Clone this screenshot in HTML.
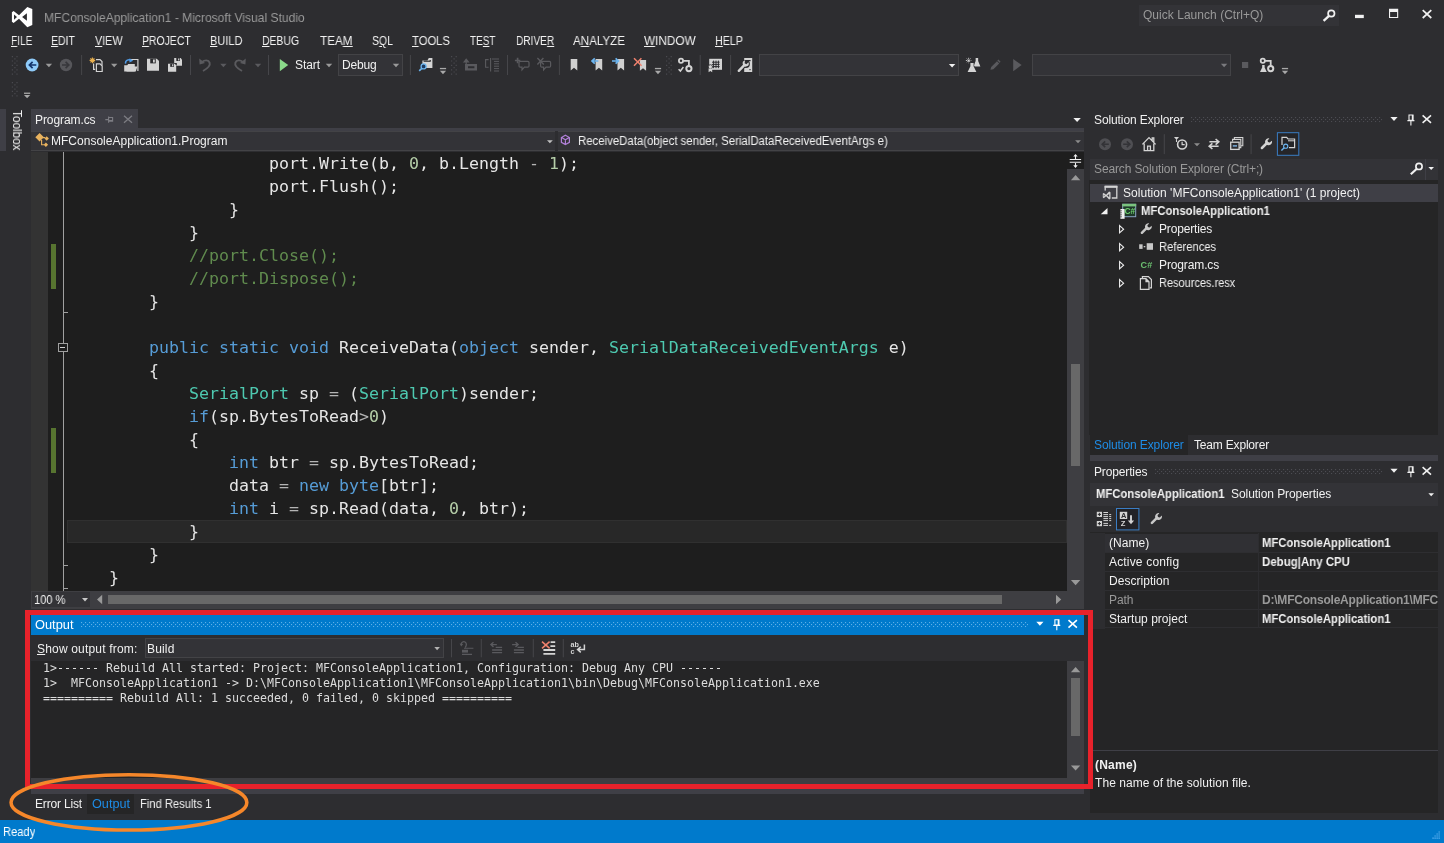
<!DOCTYPE html>
<html lang="en"><head><meta charset="utf-8"><title>MFConsoleApplication1 - Microsoft Visual Studio</title>
<style>
html,body{margin:0;padding:0;}
body{width:1444px;height:843px;overflow:hidden;background:#2D2D30;position:relative;font-family:'Liberation Sans',sans-serif;font-size:12px;color:#F1F1F1;}
.r{position:absolute;}
.t{position:absolute;white-space:pre;transform-origin:0 50%;will-change:transform;}
.t u{text-decoration:underline;text-underline-offset:1px;}
svg{position:absolute;overflow:visible;}
.c{position:absolute;white-space:pre;font-family:'DejaVu Sans Mono','Liberation Mono',monospace;font-size:16.6px;letter-spacing:0.007px;line-height:23px;color:#E6E6E6;left:69px;will-change:transform;}
.k{color:#569CD6} .y{color:#4EC9B0} .m{color:#608B4E} .n{color:#B5CEA8} .g{color:#B4B4B4}
.o{position:absolute;white-space:pre;font-family:'DejaVu Sans Mono','Liberation Mono',monospace;font-size:11.63px;line-height:15px;color:#DCDCDC;left:43px;will-change:transform;}
</style></head>
<body>
<span class="t" style="left:43.50px;top:9.90px;font-size:13px;line-height:16px;color:#999999;transform:scaleX(0.9283);">MFConsoleApplication1 - Microsoft Visual Studio</span>
<div class="r" style="left:1138.5px;top:4.5px;width:200px;height:21.5px;background:#333337;"></div>
<span class="t" style="left:1143.00px;top:6.84px;font-size:12px;line-height:16px;color:#999999;letter-spacing:0.032px;">Quick Launch (Ctrl+Q)</span>
<span class="t" style="left:10.65px;top:32.87px;font-size:12.5px;line-height:16px;color:#F1F1F1;transform:scaleX(0.8142);"><u>F</u>ILE</span>
<span class="t" style="left:51.40px;top:32.87px;font-size:12.5px;line-height:16px;color:#F1F1F1;transform:scaleX(0.8426);"><u>E</u>DIT</span>
<span class="t" style="left:95.40px;top:32.87px;font-size:12.5px;line-height:16px;color:#F1F1F1;transform:scaleX(0.8606);"><u>V</u>IEW</span>
<span class="t" style="left:142.40px;top:32.87px;font-size:12.5px;line-height:16px;color:#F1F1F1;transform:scaleX(0.8356);"><u>P</u>ROJECT</span>
<span class="t" style="left:210.40px;top:32.87px;font-size:12.5px;line-height:16px;color:#F1F1F1;transform:scaleX(0.8825);"><u>B</u>UILD</span>
<span class="t" style="left:262.40px;top:32.87px;font-size:12.5px;line-height:16px;color:#F1F1F1;transform:scaleX(0.8323);"><u>D</u>EBUG</span>
<span class="t" style="left:319.90px;top:32.87px;font-size:12.5px;line-height:16px;color:#F1F1F1;transform:scaleX(0.9357);">TEA<u>M</u></span>
<span class="t" style="left:371.90px;top:32.87px;font-size:12.5px;line-height:16px;color:#F1F1F1;transform:scaleX(0.8395);">S<u>Q</u>L</span>
<span class="t" style="left:412.40px;top:32.87px;font-size:12.5px;line-height:16px;color:#F1F1F1;transform:scaleX(0.9014);"><u>T</u>OOLS</span>
<span class="t" style="left:469.90px;top:32.87px;font-size:12.5px;line-height:16px;color:#F1F1F1;transform:scaleX(0.7980);">TE<u>S</u>T</span>
<span class="t" style="left:515.90px;top:32.87px;font-size:12.5px;line-height:16px;color:#F1F1F1;transform:scaleX(0.8098);">DRIVE<u>R</u></span>
<span class="t" style="left:573.40px;top:32.87px;font-size:12.5px;line-height:16px;color:#F1F1F1;transform:scaleX(0.9278);">A<u>N</u>ALYZE</span>
<span class="t" style="left:644.40px;top:32.87px;font-size:12.5px;line-height:16px;color:#F1F1F1;transform:scaleX(0.9433);"><u>W</u>INDOW</span>
<span class="t" style="left:715.40px;top:32.87px;font-size:12.5px;line-height:16px;color:#F1F1F1;transform:scaleX(0.8574);"><u>H</u>ELP</span>
<div class="r" style="left:338px;top:54px;width:65px;height:21.5px;background:#333337;box-sizing:border-box;border:1px solid #434346;"></div>
<div class="r" style="left:759px;top:54px;width:200px;height:21.5px;background:#333337;box-sizing:border-box;border:1px solid #434346;"></div>
<div class="r" style="left:1031.5px;top:54px;width:199px;height:21.5px;background:#333337;box-sizing:border-box;border:1px solid #434346;"></div>
<span class="t" style="left:295.40px;top:57.09px;font-size:12px;line-height:16px;color:#F1F1F1;letter-spacing:-0.069px;">Start</span>
<span class="t" style="left:341.90px;top:57.09px;font-size:12px;line-height:16px;color:#F1F1F1;letter-spacing:-0.175px;">Debug</span>
<div class="r" style="left:0px;top:109px;width:5.5px;height:42px;background:#3F3F46;"></div>
<span class="t" style="left:24px;top:109.5px;font-size:12px;line-height:14px;transform-origin:0 0;transform:rotate(90deg) scaleX(0.98);">Toolbox</span>
<div class="r" style="left:31px;top:109px;width:106.5px;height:19.5px;background:#3F3F46;"></div>
<div class="r" style="left:31px;top:128px;width:1053px;height:3.2px;background:#3F3F46;"></div>
<span class="t" style="left:34.90px;top:112.04px;font-size:12px;line-height:16px;color:#F1F1F1;letter-spacing:-0.086px;">Program.cs</span>
<div class="r" style="left:31px;top:131.2px;width:1053px;height:20.3px;background:#333337;box-sizing:border-box;border-top:1px solid #434346;border-bottom:1px solid #434346;"></div>
<div class="r" style="left:555px;top:131.2px;width:2.5px;height:20.3px;background:#2D2D30;"></div>
<span class="t" style="left:51.40px;top:132.84px;font-size:12px;line-height:16px;color:#F1F1F1;letter-spacing:0.014px;">MFConsoleApplication1.Program</span>
<span class="t" style="left:577.65px;top:132.84px;font-size:12px;line-height:16px;color:#F1F1F1;transform:scaleX(0.9497);">ReceiveData(object sender, SerialDataReceivedEventArgs e)</span>
<div class="r" style="left:31px;top:151.5px;width:1036px;height:439.5px;background:#1E1E1E;"></div>
<div class="r" style="left:31px;top:151.5px;width:16.5px;height:439.5px;background:#333333;"></div>
<div class="r" style="left:67px;top:520px;width:999.5px;height:22.5px;background:#282828;box-sizing:border-box;border:1px solid #303030;"></div>
<div class="r" style="left:50.5px;top:243.7px;width:5.7px;height:45.8px;background:#577430;"></div>
<div class="r" style="left:50.5px;top:427.7px;width:5.7px;height:45.8px;background:#577430;"></div>
<div class="r" style="left:63px;top:151.5px;width:1px;height:439.5px;background:#A0A0A0;"></div>
<div class="r" style="left:63px;top:312px;width:4.5px;height:1px;background:#A0A0A0;"></div>
<div class="r" style="left:63px;top:565px;width:4.5px;height:1px;background:#A0A0A0;"></div>
<div class="r" style="left:63px;top:588px;width:4.5px;height:1px;background:#A0A0A0;"></div>
<div class="r" style="left:58px;top:342.5px;width:9.5px;height:9.5px;background:#1E1E1E;box-sizing:border-box;border:1px solid #A0A0A0;"></div>
<div class="r" style="left:60.3px;top:346.8px;width:5px;height:1px;background:#D0D0D0;"></div>
<div class="c" style="top:151.8px">                    port.Write(b, <span class="n">0</span>, b.Length <span class="g">-</span> <span class="n">1</span>);</div>
<div class="c" style="top:174.8px">                    port.Flush();</div>
<div class="c" style="top:197.8px">                }</div>
<div class="c" style="top:220.8px">            }</div>
<div class="c" style="top:243.8px">            <span class="m">//port.Close();</span></div>
<div class="c" style="top:266.8px">            <span class="m">//port.Dispose();</span></div>
<div class="c" style="top:289.8px">        }</div>
<div class="c" style="top:335.8px">        <span class="k">public</span> <span class="k">static</span> <span class="k">void</span> ReceiveData(<span class="k">object</span> sender, <span class="y">SerialDataReceivedEventArgs</span> e)</div>
<div class="c" style="top:358.8px">        {</div>
<div class="c" style="top:381.8px">            <span class="y">SerialPort</span> sp <span class="g">=</span> (<span class="y">SerialPort</span>)sender;</div>
<div class="c" style="top:404.8px">            <span class="k">if</span>(sp.BytesToRead<span class="g">&gt;</span><span class="n">0</span>)</div>
<div class="c" style="top:427.8px">            {</div>
<div class="c" style="top:450.8px">                <span class="k">int</span> btr <span class="g">=</span> sp.BytesToRead;</div>
<div class="c" style="top:473.8px">                data <span class="g">=</span> <span class="k">new</span> <span class="k">byte</span>[btr];</div>
<div class="c" style="top:496.8px">                <span class="k">int</span> i <span class="g">=</span> sp.Read(data, <span class="n">0</span>, btr);</div>
<div class="c" style="top:519.8px">            }</div>
<div class="c" style="top:542.8px">        }</div>
<div class="c" style="top:565.8px">    }</div>
<div class="r" style="left:1067px;top:151.5px;width:17px;height:439.5px;background:#3E3E42;"></div>
<div class="r" style="left:1067px;top:151.5px;width:17px;height:17.5px;background:#1E1E1E;"></div>
<div class="r" style="left:1071px;top:364px;width:9px;height:102px;background:#686868;"></div>
<div class="r" style="left:31px;top:591px;width:1053px;height:17.5px;background:#3E3E42;"></div>
<div class="r" style="left:32px;top:592px;width:57.5px;height:15px;background:#333337;"></div>
<span class="t" style="left:34.40px;top:591.59px;font-size:12px;line-height:16px;color:#F1F1F1;transform:scaleX(0.9256);">100 %</span>
<div class="r" style="left:108px;top:595px;width:894px;height:9px;background:#686868;"></div>
<div class="r" style="left:30.5px;top:615px;width:1053.5px;height:20px;background:#007ACC;"></div>
<span class="t" style="left:34.90px;top:617.34px;font-size:12px;line-height:16px;color:#FFFFFF;transform:scaleX(1.0685);">Output</span>
<span class="t" style="left:37.40px;top:640.84px;font-size:12px;line-height:16px;color:#F1F1F1;letter-spacing:0.183px;"><u>S</u>how output from:</span>
<div class="r" style="left:144.5px;top:638px;width:299.5px;height:19.5px;background:#333337;box-sizing:border-box;border:1px solid #434346;"></div>
<span class="t" style="left:147.40px;top:640.84px;font-size:12px;line-height:16px;color:#F1F1F1;letter-spacing:0.163px;">Build</span>
<div class="r" style="left:30.5px;top:661px;width:1036.5px;height:116.5px;background:#252526;"></div>
<div class="o" style="top:661.1px">1&gt;------ Rebuild All started: Project: MFConsoleApplication1, Configuration: Debug Any CPU ------</div>
<div class="o" style="top:676.1px">1&gt;  MFConsoleApplication1 -&gt; D:\MFConsoleApplication1\MFConsoleApplication1\bin\Debug\MFConsoleApplication1.exe</div>
<div class="o" style="top:691.1px">========== Rebuild All: 1 succeeded, 0 failed, 0 skipped ==========</div>
<div class="r" style="left:1067px;top:661px;width:17px;height:116.5px;background:#3E3E42;"></div>
<div class="r" style="left:1071px;top:677.5px;width:9px;height:58.5px;background:#686868;"></div>
<div class="r" style="left:30.5px;top:777.5px;width:1053.5px;height:7px;background:#3E3E42;"></div>
<div class="r" style="left:30.5px;top:789.2px;width:1053.5px;height:4.6px;background:#3F3F46;"></div>
<div class="r" style="left:87px;top:793.8px;width:46.8px;height:20px;background:#252526;"></div>
<span class="t" style="left:35.40px;top:795.84px;font-size:12px;line-height:16px;color:#F1F1F1;letter-spacing:-0.169px;">Error List</span>
<span class="t" style="left:91.90px;top:795.84px;font-size:12px;line-height:16px;color:#1E8CE6;transform:scaleX(1.0546);">Output</span>
<span class="t" style="left:139.90px;top:795.84px;font-size:12px;line-height:16px;color:#F1F1F1;transform:scaleX(0.9322);">Find Results 1</span>
<span class="t" style="left:1093.90px;top:112.24px;font-size:12px;line-height:16px;color:#F1F1F1;letter-spacing:-0.099px;">Solution Explorer</span>
<div class="r" style="left:1090px;top:158.5px;width:348px;height:21.5px;background:#333337;"></div>
<span class="t" style="left:1094.40px;top:161.34px;font-size:12px;line-height:16px;color:#999999;letter-spacing:-0.124px;">Search Solution Explorer (Ctrl+;)</span>
<div class="r" style="left:1088.5px;top:180px;width:349.5px;height:255px;background:#252526;"></div>
<div class="r" style="left:1090px;top:183.5px;width:348px;height:18.2px;background:#3F3F46;"></div>
<span class="t" style="left:1122.80px;top:185.04px;font-size:12px;line-height:16px;color:#F1F1F1;letter-spacing:0.039px;">Solution 'MFConsoleApplication1' (1 project)</span>
<span class="t" style="left:1141.20px;top:203.04px;font-size:12px;line-height:16px;color:#F1F1F1;font-weight:bold;transform:scaleX(0.9431);">MFConsoleApplication1</span>
<span class="t" style="left:1158.90px;top:221.04px;font-size:12px;line-height:16px;color:#F1F1F1;letter-spacing:-0.160px;">Properties</span>
<span class="t" style="left:1158.90px;top:239.04px;font-size:12px;line-height:16px;color:#F1F1F1;transform:scaleX(0.9303);">References</span>
<span class="t" style="left:1158.90px;top:257.04px;font-size:12px;line-height:16px;color:#F1F1F1;letter-spacing:-0.126px;">Program.cs</span>
<span class="t" style="left:1158.90px;top:275.04px;font-size:12px;line-height:16px;color:#F1F1F1;transform:scaleX(0.9151);">Resources.resx</span>
<div class="r" style="left:1090px;top:435px;width:98px;height:19.5px;background:#252526;"></div>
<span class="t" style="left:1094.40px;top:437.24px;font-size:12px;line-height:16px;color:#1E8CE6;letter-spacing:-0.099px;">Solution Explorer</span>
<span class="t" style="left:1194.40px;top:437.24px;font-size:12px;line-height:16px;color:#F1F1F1;letter-spacing:-0.183px;">Team Explorer</span>
<div class="r" style="left:1090px;top:454.5px;width:348px;height:6px;background:#3F3F46;"></div>
<span class="t" style="left:1093.90px;top:463.94px;font-size:12px;line-height:16px;color:#F1F1F1;letter-spacing:-0.140px;">Properties</span>
<div class="r" style="left:1090px;top:483px;width:348px;height:22.5px;background:#333337;"></div>
<span class="t" style="left:1095.90px;top:486.44px;font-size:12px;line-height:16px;color:#F1F1F1;font-weight:bold;transform:scaleX(0.9402);">MFConsoleApplication1</span>
<span class="t" style="left:1231.00px;top:486.44px;font-size:12px;line-height:16px;color:#F1F1F1;letter-spacing:-0.063px;">Solution Properties</span>
<div class="r" style="left:1090px;top:532px;width:348px;height:281px;background:#252526;"></div>
<div class="r" style="left:1090px;top:533px;width:15px;height:95.5px;background:#2D2D30;"></div>
<div class="r" style="left:1105px;top:533.5px;width:153px;height:19px;background:#303034;"></div>
<div class="r" style="left:1105px;top:552.3px;width:333px;height:1px;background:#2E2E31;"></div>
<span class="t" style="left:1108.80px;top:535.04px;font-size:12px;line-height:16px;color:#F1F1F1;letter-spacing:0.064px;">(Name)</span>
<span class="t" style="left:1261.90px;top:535.04px;font-size:12px;line-height:16px;color:#F1F1F1;font-weight:bold;transform:scaleX(0.9402);">MFConsoleApplication1</span>
<div class="r" style="left:1105px;top:571.05px;width:333px;height:1px;background:#2E2E31;"></div>
<span class="t" style="left:1108.80px;top:554.04px;font-size:12px;line-height:16px;color:#F1F1F1;letter-spacing:0.173px;">Active config</span>
<span class="t" style="left:1261.90px;top:554.04px;font-size:12px;line-height:16px;color:#F1F1F1;font-weight:bold;transform:scaleX(0.9562);">Debug|Any CPU</span>
<div class="r" style="left:1105px;top:589.8px;width:333px;height:1px;background:#2E2E31;"></div>
<span class="t" style="left:1108.80px;top:573.04px;font-size:12px;line-height:16px;color:#F1F1F1;letter-spacing:0.034px;">Description</span>
<div class="r" style="left:1105px;top:608.55px;width:333px;height:1px;background:#2E2E31;"></div>
<span class="t" style="left:1108.80px;top:592.04px;font-size:12px;line-height:16px;color:#999999;letter-spacing:-0.122px;">Path</span>
<span class="t" style="left:1261.90px;top:592.04px;font-size:12px;line-height:16px;color:#999999;font-weight:bold;letter-spacing:-0.214px;">D:\MFConsoleApplication1\MFC</span>
<div class="r" style="left:1105px;top:627.3px;width:333px;height:1px;background:#2E2E31;"></div>
<span class="t" style="left:1108.80px;top:611.04px;font-size:12px;line-height:16px;color:#F1F1F1;letter-spacing:0.017px;">Startup project</span>
<span class="t" style="left:1261.90px;top:611.04px;font-size:12px;line-height:16px;color:#F1F1F1;font-weight:bold;transform:scaleX(0.9402);">MFConsoleApplication1</span>
<div class="r" style="left:1258px;top:533px;width:1px;height:95px;background:#2D2D30;"></div>
<div class="r" style="left:1090px;top:750px;width:348px;height:1px;background:#3F3F46;"></div>
<span class="t" style="left:1095.40px;top:756.84px;font-size:12px;line-height:16px;color:#F1F1F1;font-weight:bold;letter-spacing:0.219px;">(Name)</span>
<span class="t" style="left:1095.40px;top:774.84px;font-size:12px;line-height:16px;color:#F1F1F1;letter-spacing:0.064px;">The name of the solution file.</span>
<div class="r" style="left:1090px;top:812.5px;width:354px;height:8px;background:#2D2D30;"></div>
<div class="r" style="left:0px;top:820px;width:1444px;height:23px;background:#007ACC;"></div>
<span class="t" style="left:3.20px;top:824.09px;font-size:12px;line-height:16px;color:#FFFFFF;transform:scaleX(0.9283);">Ready</span>
<div class="r" style="left:25.2px;top:609.7px;width:1067.9px;height:179.6px;background:transparent;box-sizing:border-box;border:5.3px solid #E8222B;"></div>
<svg style="left:0;top:760px" width="270" height="83" viewBox="0 760 270 83"><ellipse cx="128.950" cy="802.400" rx="117.900" ry="27.700" fill="none" stroke="#F6872A" stroke-width="3.500"/></svg>
<svg style="left:0;top:0" width="1444" height="843" viewBox="0 0 1444 843"><path d="M11.8 56h1.2v1.2h-1.2zM16.4 56h1.2v1.2h-1.2zM14.3 58.2h1.2v1.2h-1.2zM11.8 60.400000000000006h1.2v1.2h-1.2zM16.4 60.400000000000006h1.2v1.2h-1.2zM14.3 62.60000000000001h1.2v1.2h-1.2zM11.8 64.80000000000001h1.2v1.2h-1.2zM16.4 64.80000000000001h1.2v1.2h-1.2zM14.3 67.00000000000001h1.2v1.2h-1.2zM11.8 69.20000000000002h1.2v1.2h-1.2zM16.4 69.20000000000002h1.2v1.2h-1.2zM14.3 71.40000000000002h1.2v1.2h-1.2zM11.8 73.60000000000002h1.2v1.2h-1.2zM16.4 73.60000000000002h1.2v1.2h-1.2z" fill="#4A4A4F"/><path d="M11.8 82h1.2v1.2h-1.2zM16.4 82h1.2v1.2h-1.2zM14.3 84.2h1.2v1.2h-1.2zM11.8 86.4h1.2v1.2h-1.2zM16.4 86.4h1.2v1.2h-1.2zM14.3 88.60000000000001h1.2v1.2h-1.2zM11.8 90.80000000000001h1.2v1.2h-1.2zM16.4 90.80000000000001h1.2v1.2h-1.2zM14.3 93.00000000000001h1.2v1.2h-1.2zM11.8 95.20000000000002h1.2v1.2h-1.2zM16.4 95.20000000000002h1.2v1.2h-1.2z" fill="#4A4A4F"/><rect x="24" y="92.6" width="6.2" height="1.3" fill="#A8A8A8"/><path d="M24 95h6.2l-3.1 3.2z" fill="#A8A8A8"/><circle cx="32.1" cy="65" r="6.4" fill="#8FCBF9"/><path d="M36.3 65H29.6M32.6 61.9L29.4 65l3.2 3.1" stroke="#14356B" stroke-width="1.7" fill="none"/><path d="M45.7 63.7h6.4l-3.2 3.6z" fill="#9A9A9A"/><circle cx="66" cy="65" r="6.2" fill="#56565A"/><path d="M62 65h6.6M65.6 61.9l3.2 3.1-3.2 3.1" stroke="#37373B" stroke-width="1.7" fill="none"/><rect x="81.1" y="55" width="1" height="20" fill="#46464A"/><path d="M92.4 57.6v5.6M89.6 60.4h5.6M90.4 58.4l4 4M94.4 58.4l-4 4" stroke="#E9B04E" stroke-width="1.1"/><path d="M96 59.6h4l2 2v4M93.6 63.4v6h1.6" stroke="#D4D4D4" stroke-width="1.2" fill="none"/><path d="M96.4 63.9h3.6l2.2 2.2v5.4h-5.8z" stroke="#D4D4D4" stroke-width="1.2" fill="#2D2D30"/><path d="M111 63.7h6.4l-3.2 3.6z" fill="#9A9A9A"/><path d="M129.5 59.5h8.4v11.6" stroke="#D4D4D4" stroke-width="1.2" fill="none"/><path d="M124.2 65.2h3l1-1.2h6.6v7.6h-10.6z" fill="#D4D4D4"/><path d="M126.4 71.6l2-5.2h9l-1.6 5.2z" fill="#D4D4D4"/><path d="M125.6 63.6c-.6-3.2 3.4-5.2 5.6-2.8" stroke="#4F9BE6" stroke-width="1.5" fill="none"/><path d="M129.6 58.2l3.6 2.6-3.8 1.6z" fill="#4F9BE6"/><path d="M147 58.8h9.84l2.16 2.16v9.84h-12z" fill="#D4D4D4"/><rect x="150.24" y="58.8" width="5.5200000000000005" height="4.5600000000000005" fill="#2D2D30"/><rect x="153.0" y="59.519999999999996" width="1.7999999999999998" height="3.0" fill="#D4D4D4"/><path d="M174.2 58h6.396l1.404 1.404v6.396h-7.8z" fill="#D4D4D4"/><rect x="176.30599999999998" y="58" width="3.588" height="2.964" fill="#2D2D30"/><rect x="178.1" y="58.468" width="1.17" height="1.95" fill="#D4D4D4"/><rect x="167.2" y="63" width="9.6" height="9.4" fill="#2D2D30"/><path d="M168 63.8h6.723999999999999l1.4759999999999998 1.4759999999999998v6.524h-8.2z" fill="#D4D4D4"/><rect x="170.214" y="63.8" width="3.772" height="3.04" fill="#2D2D30"/><rect x="172.1" y="64.28" width="1.2299999999999998" height="2.0" fill="#D4D4D4"/><rect x="190.0" y="55" width="1" height="20" fill="#46464A"/><path d="M203 71c4.6-2.6 7.6-5.4 6.6-8.4-1-2.8-5-2.8-7.4-.6" stroke="#5A5A5E" stroke-width="1.9" fill="none"/><path d="M199.2 58.6l.4 6 5.4-1.6z" fill="#5A5A5E"/><path d="M220.2 63.7h6.4l-3.2 3.6z" fill="#5A5A5E"/><path d="M242 71c-4.600-2.600-7.600-5.400-6.600-8.400 1-2.800 5-2.800 7.400-.6" stroke="#5A5A5E" stroke-width="1.900" fill="none"/><path d="M245.800 58.600l-.4 6-5.400-1.600z" fill="#5A5A5E"/><path d="M254.8 63.7h6.4l-3.2 3.6z" fill="#5A5A5E"/><rect x="268.0" y="55" width="1" height="20" fill="#46464A"/><path d="M279.8 59v12.2l8.400-6.100z" fill="#8AD98A"/><path d="M325.8 63.7h6.4l-3.2 3.6z" fill="#9A9A9A"/><path d="M392.8 63.7h6.4l-3.2 3.6z" fill="#9A9A9A"/><rect x="409.9" y="55" width="1" height="20" fill="#46464A"/><path d="M422.400 60.400h5l1.400-2.400h3.600v10h-10z" fill="#D4D4D4"/><rect x="423.600" y="60.600" width="6.400" height="1.200" fill="#2D2D30"/><circle cx="430.300" cy="60.900" r=".8" fill="#2D2D30"/><circle cx="423.600" cy="66.400" r="2.500" fill="#1E3A5F" stroke="#6CB5F0" stroke-width="1.300"/><path d="M421.800 68.400l-2.600 2.400" stroke="#6CB5F0" stroke-width="1.600"/><rect x="439.9" y="67.9" width="6.2" height="1.3" fill="#A8A8A8"/><path d="M439.9 70.8h6.2l-3.1 3.4z" fill="#A8A8A8"/><path d="M451 56h1.2v1.2h-1.2zM455.6 56h1.2v1.2h-1.2zM453.5 58.2h1.2v1.2h-1.2zM451 60.400000000000006h1.2v1.2h-1.2zM455.6 60.400000000000006h1.2v1.2h-1.2zM453.5 62.60000000000001h1.2v1.2h-1.2zM451 64.80000000000001h1.2v1.2h-1.2zM455.6 64.80000000000001h1.2v1.2h-1.2zM453.5 67.00000000000001h1.2v1.2h-1.2zM451 69.20000000000002h1.2v1.2h-1.2zM455.6 69.20000000000002h1.2v1.2h-1.2zM453.5 71.40000000000002h1.2v1.2h-1.2zM451 73.60000000000002h1.2v1.2h-1.2zM455.6 73.60000000000002h1.2v1.2h-1.2z" fill="#4A4A4F"/><path d="M466.200 59.400v5M464 62l2.200-2.800 2.200 2.800z" stroke="#5A5A5E" stroke-width="1.200" fill="#5A5A5E"/><path d="M465 64h12v6.600h-12z M468 66.200h6.400v2h-6.400z" fill="#5A5A5E" fill-rule="evenodd"/><path d="M488.600 59.600h-3v7.600h3M490.600 58v13.400" stroke="#5A5A5E" stroke-width="1.100" fill="none"/><path d="M492 59h7M494 61.400h5M494 63.800h5M494 66.200h5M494 68.600h5M494 71h5" stroke="#5A5A5E" stroke-width="1"/><rect x="507.0" y="55" width="1" height="20" fill="#46464A"/><path d="M520.2 61.400h7.600q1.200 0 1.200 1.200v3.400q0 1.200-1.200 1.200h-3.400l-2.400 2.800v-2.800h-1.800q-1.200 0-1.200-1.200v-3.400q0-1.200 1.200-1.200z" stroke="#5A5A5E" stroke-width="1.200" fill="none"/><path d="M517.600 57.800v5.400M514.900 60.500h5.400" stroke="#5A5A5E" stroke-width="1.700"/><path d="M541.8 61.400h7.600q1.200 0 1.200 1.200v3.400q0 1.200-1.200 1.200h-3.400l-2.400 2.800v-2.800h-1.800q-1.200 0-1.200-1.200v-3.400q0-1.200 1.200-1.200z" stroke="#5A5A5E" stroke-width="1.200" fill="none"/><path d="M537.400 58l6.400 6.400M543.400 58l-6 6.400" stroke="#5A5A5E" stroke-width="1.400"/><rect x="558.9" y="55" width="1" height="20" fill="#46464A"/><path d="M570.7 59h6.6v11.4l-3.3 -2.772l-3.3 2.772z" fill="#D0D0D0"/><path d="M595.6 59h6.6v11.4l-3.3 -2.772l-3.3 2.772z" fill="#D0D0D0"/><path d="M598.400 61h-5.600M594.800 58.400L592 61l2.800 2.600" stroke="#6CB5F0" stroke-width="1.700" fill="none"/><path d="M617.5 59h6.6v11.4l-3.3 -2.772l-3.3 2.772z" fill="#D0D0D0"/><path d="M612 61h5.600M615.600 58.400l2.800 2.600-2.800 2.600" stroke="#6CB5F0" stroke-width="1.700" fill="none"/><path d="M639.9 60h6.2v10.8l-3.1 -2.604l-3.1 2.604z" fill="#D0D0D0"/><path d="M634 58.200l7.600 7.600M641.400 58.200L634 65.800" stroke="#F0826E" stroke-width="1.500"/><rect x="654.9" y="67.9" width="6.2" height="1.3" fill="#A8A8A8"/><path d="M654.9 70.8h6.2l-3.1 3.4z" fill="#A8A8A8"/><path d="M666 56h1.2v1.2h-1.2zM670.6 56h1.2v1.2h-1.2zM668.5 58.2h1.2v1.2h-1.2zM666 60.400000000000006h1.2v1.2h-1.2zM670.6 60.400000000000006h1.2v1.2h-1.2zM668.5 62.60000000000001h1.2v1.2h-1.2zM666 64.80000000000001h1.2v1.2h-1.2zM670.6 64.80000000000001h1.2v1.2h-1.2zM668.5 67.00000000000001h1.2v1.2h-1.2zM666 69.20000000000002h1.2v1.2h-1.2zM670.6 69.20000000000002h1.2v1.2h-1.2zM668.5 71.40000000000002h1.2v1.2h-1.2zM666 73.60000000000002h1.2v1.2h-1.2zM670.6 73.60000000000002h1.2v1.2h-1.2z" fill="#4A4A4F"/><circle cx="681.0" cy="60.800" r="2.100" stroke="#D4D4D4" stroke-width="1.800" fill="none"/><path d="M683.3000000000001 60.800h5.600v5" stroke="#D4D4D4" stroke-width="1.800" fill="none"/><circle cx="688.9" cy="68.600" r="2.600" stroke="#D4D4D4" stroke-width="2" fill="none"/><path d="M678.600 69.200l1.800 1.800 3-4" stroke="#D4D4D4" stroke-width="1.500" fill="none"/><rect x="699.7" y="55" width="1" height="20" fill="#46464A"/><rect x="709.200" y="58.800" width="12.800" height="11" fill="#D4D4D4"/><path d="M712 62.200h7.600M712 64.400h7.600M712 66.600h7.600M713.600 60.600v7.600M716 60.600v7.600M718.400 60.600v7.600" stroke="#2D2D30" stroke-width="1"/><circle cx="710.400" cy="66.800" r="2.100" fill="#D4D4D4" stroke="#2D2D30" stroke-width=".8"/><path d="M708.600 68.400v3.800l1.800-1.200 1.800 1.200v-3.800z" fill="#D4D4D4"/><rect x="730.1" y="55" width="1" height="20" fill="#46464A"/><rect x="744.200" y="58" width="8" height="14" fill="#D4D4D4"/><rect x="745.800" y="60" width="4.800" height="1.200" fill="#2D2D30"/><rect x="749.400" y="69" width="1.200" height="1.200" fill="#2D2D30"/><path d="M738.600 71l5.200-5.400" stroke="#2D2D30" stroke-width="4.400" stroke-linecap="round"/><circle cx="746" cy="64" r="3.900" fill="#2D2D30"/><path d="M738.800 70.800l5-5.200" stroke="#D4D4D4" stroke-width="2.400" stroke-linecap="round"/><path d="M748.400 62.200a3 3 0 1 1-3.400-1.600l-.4 2.600 1.800 1z" fill="#D4D4D4"/><path d="M948.9 64h6.4l-3.2 3.6z" fill="#F1F1F1"/><path d="M975.64 58h2.52v3.024l2.24 5.376h-7l2.24 -5.376z" fill="#D4D4D4"/><path d="M968.600 57.800v5.400M965.900 60.500h5.400M966.700 58.600l3.800 3.800M970.500 58.600l-3.800 3.800" stroke="#E4E4E4" stroke-width=".9" stroke-dasharray="1 .7"/><path d="M966.600 72.800l3.200-7v-3.600h4.400v3.600l3.200 7z" fill="#2D2D30"/><path d="M970.416 63h3.168v3.2399999999999998l2.8160000000000003 5.76h-8.8l2.8160000000000003 -5.76z" fill="#D4D4D4"/><path d="M990.400 69.800l.8-2.800 5.800-5.800 2.200 2.200-5.800 5.800z" fill="#5A5A5E"/><path d="M997.400 60.600l1-1 2.200 2.200-1 1z" fill="#5A5A5E"/><path d="M1013.200 59v12.200l8.400-6.100z" fill="#5A5A5E"/><path d="M1220.9 63.7h6.4l-3.2 3.6z" fill="#7A7A7E"/><rect x="1242" y="62" width="6.200" height="6" fill="#5A5A5E"/><circle cx="1262.8000000000002" cy="60.800" r="2.100" stroke="#D4D4D4" stroke-width="1.800" fill="none"/><path d="M1265.1000000000001 60.800h5.600v5" stroke="#D4D4D4" stroke-width="1.800" fill="none"/><circle cx="1270.7" cy="68.600" r="2.600" stroke="#D4D4D4" stroke-width="2" fill="none"/><path d="M1262.176 65h2.448v2.52l2.176 4.48h-6.8l2.176 -4.48z" fill="#D4D4D4"/><rect x="1281.9" y="67.9" width="6.2" height="1.3" fill="#A8A8A8"/><path d="M1281.9 70.8h6.2l-3.1 3.4z" fill="#A8A8A8"/><path fill-rule="evenodd" fill="#FFFFFF" d="M11.900 12.300L13.600 11.100L19 15.300L27.300 6.900L32.300 8.900V24.900L27.300 27.200L19 18.800L13.600 23L11.900 21.800ZM14 14.400V19.700L17 17ZM26.900 13.300V20.800L22.100 17Z"/><circle cx="1331.300" cy="13.500" r="3.200" stroke="#F1F1F1" stroke-width="1.700" fill="none"/><path d="M1329 15.900l-5.400 5" stroke="#F1F1F1" stroke-width="2.300"/><rect x="1355" y="14.800" width="8.800" height="3.300" fill="#F1F1F1"/><path d="M1389 8.800h9.200v9.300h-9.200z M1390.100 11.900v5.100h7v-5.100z" fill="#F1F1F1" fill-rule="evenodd"/><path d="M1422.700 10.200l8.600 7.800M1431.300 10.200l-8.600 7.800" stroke="#F1F1F1" stroke-width="1.700"/><path d="M105.300 119.600h3.200M108.600 116.600v6.200M108.600 117.500h4v3.600h-4M108.600 120.600h4" stroke="#7C7C82" stroke-width="1.100" fill="none"/><path d="M124 115.800l8 7M132 115.800l-8 7" stroke="#7C7C82" stroke-width="1.300"/><path d="M1073.4 118h7.4l-3.7 4z" fill="#F1F1F1"/><path d="M39.600 133l4.300 4.200-4.300 4.200-4.300-4.200z" fill="#E8B25E"/><path d="M46.700 136.300l2.200 2.200-2.200 2.200-2.200-2.200zM45.900 142.500l2.200 2.200-2.200 2.200-2.200-2.200z" fill="#E8B25E"/><path d="M43 137.600h2M41.600 140v4.700h2.600" stroke="#E8B25E" stroke-width="1.100" fill="none"/><path d="M547 140.3h5.8l-2.9 3z" fill="#C0C0C0"/><path d="M565.400 135.200l4 2.300v4.800l-4 2.300-4-2.300v-4.800zM561.600 137.600l3.800 2.200 3.800-2.200M565.400 139.800v4.600" stroke="#B180D7" stroke-width="1.200" fill="none"/><path d="M1075.1 140.3h5.8l-2.9 3z" fill="#8C8C8C"/><path d="M1069.700 159.500h11.400M1069.700 162.300h11.400" stroke="#F1F1F1" stroke-width="1.100"/><path d="M1075.500 155v4M1075.500 163v4" stroke="#F1F1F1" stroke-width="1.100"/><path d="M1073.300 156.600l2.200-2.600 2.200 2.600zM1073.300 165.300l2.200 2.600 2.200-2.600z" fill="#F1F1F1"/><path d="M1070.9 180.2l4.7 -5.2l4.7 5.2z" fill="#999999"/><path d="M1070.9 580l4.7 5.2l4.7 -5.2z" fill="#999999"/><path d="M102.2 594.8l-5.2 4.7l5.2 4.7z" fill="#999999"/><path d="M1056 594.8l5.2 4.7l-5.2 4.7z" fill="#999999"/><path d="M82 598h6l-3.0 3.4z" fill="#C8C8C8"/><defs><pattern id="gb" x="81" y="622" width="4" height="4" patternUnits="userSpaceOnUse"><rect x="0" y="0" width="1.100" height="1.100" fill="#5FB0E8"/><rect x="2" y="2" width="1.100" height="1.100" fill="#5FB0E8"/></pattern><pattern id="gd" x="1191" y="117" width="4" height="4" patternUnits="userSpaceOnUse"><rect x="0" y="0" width="1.100" height="1.100" fill="#4C4C52"/><rect x="2" y="2" width="1.100" height="1.100" fill="#4C4C52"/></pattern><pattern id="gp" x="1155" y="469" width="4" height="4" patternUnits="userSpaceOnUse"><rect x="0" y="0" width="1.100" height="1.100" fill="#4C4C52"/><rect x="2" y="2" width="1.100" height="1.100" fill="#4C4C52"/></pattern></defs><rect x="81" y="622" width="947" height="5.200" fill="url(#gb)"/><path d="M1036.3 621.8000000000001h7.2l-3.6 4z" fill="#FFFFFF"/><path d="M1054.8999999999999 619.8000000000001h4v5.200h-4zM1053.3 625.4000000000001h7M1056.8 625.6v4.600" stroke="#FFFFFF" stroke-width="1.100" fill="none"/><rect x="1057.7" y="619.8000000000001" width="1.400" height="5.200" fill="#FFFFFF"/><path d="M1068.5 620.2l8.400 7.400M1076.9 620.2l-8.400 7.400" stroke="#FFFFFF" stroke-width="1.600"/><path d="M1390.4 117.0h7.2l-3.6 4z" fill="#F1F1F1"/><path d="M1409.0 115.0h4v5.200h-4zM1407.4 120.60000000000001h7M1410.9 120.80000000000001v4.600" stroke="#F1F1F1" stroke-width="1.100" fill="none"/><rect x="1411.8000000000002" y="115.0" width="1.400" height="5.200" fill="#F1F1F1"/><path d="M1422.6000000000001 115.4l8.400 7.400M1431.0000000000002 115.4l-8.400 7.400" stroke="#F1F1F1" stroke-width="1.600"/><path d="M1390.4 468.8h7.2l-3.6 4z" fill="#F1F1F1"/><path d="M1409.0 466.8h4v5.200h-4zM1407.4 472.4h7M1410.9 472.59999999999997v4.600" stroke="#F1F1F1" stroke-width="1.100" fill="none"/><rect x="1411.8000000000002" y="466.8" width="1.400" height="5.200" fill="#F1F1F1"/><path d="M1422.6000000000001 467.2l8.400 7.400M1431.0000000000002 467.2l-8.400 7.400" stroke="#F1F1F1" stroke-width="1.600"/><rect x="1191" y="117" width="191.500" height="5.200" fill="url(#gd)"/><rect x="1155" y="469" width="227.500" height="5.200" fill="url(#gp)"/><path d="M434.3 647h5.6l-2.8 3.2z" fill="#B4B4B4"/><rect x="451.0" y="639" width="1" height="18.299999999999955" fill="#46464A"/><rect x="480.8" y="639" width="1" height="18.299999999999955" fill="#46464A"/><rect x="532.8" y="639" width="1" height="18.299999999999955" fill="#46464A"/><rect x="562.8" y="639" width="1" height="18.299999999999955" fill="#46464A"/><path d="M465.200 647.600c1.600-2.200 1.600-4.600-.2-5.600-1.600-.8-3.400.2-3.800 2" stroke="#5A5A5E" stroke-width="1.300" fill="none"/><path d="M459.600 643.600l1.600 3 2-2.600z" fill="#5A5A5E"/><path d="M464 648.300h9.400M462 654.400h10" stroke="#5A5A5E" stroke-width="1.100"/><rect x="462" y="649.800" width="6" height="2.800" fill="#5A5A5E"/><path d="M496.8 644.600h-5.400M493.5 642.200l-2.600 2.400 2.600 2.400" stroke="#5A5A5E" stroke-width="1.400" fill="none"/><path d="M495.70000000000005 647.300h6.400M492.1 650h10M492.1 652.700h10" stroke="#5A5A5E" stroke-width="1.300"/><path d="M512.1 644.600h5.400M515.5 642.200l2.600 2.400-2.600 2.400" stroke="#5A5A5E" stroke-width="1.400" fill="none"/><path d="M517.5 647.300h6.400M513.9 650h10M513.9 652.700h10" stroke="#5A5A5E" stroke-width="1.300"/><path d="M542 641.600l7.600 6.800M549.600 641.600l-7.600 6.800" stroke="#F0826E" stroke-width="1.500"/><path d="M550.600 642.100h4.600M550.400 646.100h4.800M543.400 650h11.800M543.400 653.900h11.800" stroke="#D4D4D4" stroke-width="1.800"/><path d="M584.400 644.600v5h-6.400M580.800 646.800l-3.200 2.800 3.200 2.800" stroke="#D4D4D4" stroke-width="1.500" fill="none"/><text x="570.600" y="647.400" font-family="Liberation Sans,sans-serif" font-size="7.200" font-weight="bold" fill="#D4D4D4">ab</text><text x="570.600" y="653.600" font-family="Liberation Sans,sans-serif" font-size="7.200" font-weight="bold" fill="#D4D4D4">c</text><path d="M1070.9 672.2l4.7 -5.2l4.7 5.2z" fill="#999999"/><path d="M1070.9 765.4l4.7 5.2l4.7 -5.2z" fill="#999999"/><circle cx="1105" cy="144.200" r="6" fill="#4F4F53"/><path d="M1108.800 144.200h-6.400M1105.200 141.300l-3 2.900 3 2.900" stroke="#333337" stroke-width="1.600" fill="none"/><circle cx="1127" cy="144.200" r="6" fill="#4F4F53"/><path d="M1123.200 144.200h6.400M1126.800 141.300l3 2.900-3 2.900" stroke="#333337" stroke-width="1.600" fill="none"/><path d="M1142.400 144.400l6.600-6.800 6.600 6.800M1144.200 143.600v7h9.600v-7M1147.600 150.600v-4.400h2.800v4.400M1152.200 140.400v-2.600h1.600v4.200" stroke="#D4D4D4" stroke-width="1.300" fill="none"/><rect x="1163.8" y="134.2" width="1" height="19.900000000000006" fill="#46464A"/><path d="M1174 137h5l-2.500 3z" fill="#D4D4D4"/><circle cx="1182.100" cy="144.500" r="4.500" stroke="#D4D4D4" stroke-width="1.600" fill="none"/><path d="M1182.100 141.800v2.900h2.600" stroke="#D4D4D4" stroke-width="1.200" fill="none"/><path d="M1176.500 139.500v2.500" stroke="#D4D4D4" stroke-width="1.100"/><path d="M1194 143.2h6l-3.0 3z" fill="#8C8C8C"/><path d="M1209.400 141.800h9.200M1215.600 139l3.200 2.800-3.200 2.800M1218.600 146.200h-9.200M1212.400 143.400l-3.200 2.800 3.200 2.800" stroke="#D4D4D4" stroke-width="1.600" fill="none"/><path d="M1234.400 139.600v-2.100h8.400v8.200h-2.200M1232.600 141.400v-2h8.200v8.200h-2" stroke="#D4D4D4" stroke-width="1.100" fill="none"/><rect x="1230.700" y="142.200" width="8.400" height="7.200" stroke="#D4D4D4" stroke-width="1.300" fill="#2D2D30"/><rect x="1232.800" y="145.200" width="4.200" height="1.400" fill="#7FB6E8"/><rect x="1250.6" y="134.2" width="1" height="19.900000000000006" fill="#46464A"/><g transform="translate(1260.7 138.2) scale(1)"><path d="M1.200 9.800l5-5" stroke="#D4D4D4" stroke-width="2.500" stroke-linecap="round"/><path d="M11.200 2.600a3.500 3.500 0 1 1-2.500-2.400l-1.900 2 .5 1.700 1.700.5z" fill="#D4D4D4"/></g><rect x="1277.400" y="132.700" width="21.400" height="22.600" fill="#252528" stroke="#3A7DC4" stroke-width="1"/><path d="M1282 145v-7.600h4.600l1.400 1.600h6.600v8.600h-5.600" stroke="#D4D4D4" stroke-width="1.200" fill="none"/><path d="M1288 140.800h6" stroke="#D4D4D4" stroke-width="1"/><circle cx="1285.700" cy="146.200" r="2.100" stroke="#6CB5F0" stroke-width="1.100" fill="none"/><path d="M1284.200 147.800l-2.800 2.800" stroke="#6CB5F0" stroke-width="1.400"/><circle cx="1419" cy="166.400" r="3.100" stroke="#F1F1F1" stroke-width="1.700" fill="none"/><path d="M1416.800 168.700l-6 5.600" stroke="#F1F1F1" stroke-width="2.200"/><rect x="1425" y="159" width="1" height="21" fill="#3F3F46"/><path d="M1428.4 167.1h5.6l-2.8 3z" fill="#F1F1F1"/><path d="M1105.200 186v10.600M1105 186.600h11.800v11.400h-5" stroke="#D4D4D4" stroke-width="1.300" fill="none"/><rect x="1104.600" y="185.600" width="12.800" height="2.200" fill="#D4D4D4"/><rect x="1102" y="190.600" width="8.800" height="9" fill="#3F3F46"/><path fill-rule="evenodd" fill="#D4D4D4" d="M1102.800 193.500l.9-.6 2.400 1.900 3-3.200 1.400.7v6.400l-1.400.8-3-3.200-2.400 1.900-.9-.6zM1103.700 194.700v1.900l1.100-.9zM1109.200 194v3.200l-2-1.600z"/><path d="M1107.500 208v6.200h-6.800z" fill="#F1F1F1"/><path d="M1119.600 225.6l4 3.600-4 3.600z" stroke="#F1F1F1" stroke-width="1.100" fill="none"/><path d="M1119.600 243.6l4 3.600-4 3.600z" stroke="#F1F1F1" stroke-width="1.100" fill="none"/><path d="M1119.600 261.59999999999997l4 3.600-4 3.600z" stroke="#F1F1F1" stroke-width="1.100" fill="none"/><path d="M1119.600 279.59999999999997l4 3.600-4 3.600z" stroke="#F1F1F1" stroke-width="1.100" fill="none"/><rect x="1122.700" y="204.300" width="13" height="12.400" fill="#1F3A2A" stroke="#8CA6C8" stroke-width="1"/><rect x="1122.200" y="203.800" width="14" height="2.600" fill="#7BC47F"/><text x="1124.400" y="214.400" font-family="Liberation Sans,sans-serif" font-size="8.400" font-weight="bold" fill="#6FD06F" textLength="10.800" lengthAdjust="spacingAndGlyphs">C#</text><rect x="1120.400" y="209" width="4.200" height="9.800" fill="#F1F1F1"/><path d="M1120.400 210.800h1.400M1120.400 212.800h1.400M1120.400 214.800h1.400M1120.400 216.800h1.400" stroke="#252526" stroke-width=".8"/><g transform="translate(1140.7 223.2) scale(0.98)"><path d="M1.200 9.800l5-5" stroke="#C8C8C8" stroke-width="2.500" stroke-linecap="round"/><path d="M11.200 2.600a3.500 3.500 0 1 1-2.500-2.400l-1.900 2 .5 1.700 1.700.5z" fill="#C8C8C8"/></g><rect x="1139.200" y="244.300" width="3.400" height="4.600" fill="#C8C8C8"/><rect x="1143.700" y="246" width="1.600" height="1.300" fill="#C8C8C8"/><rect x="1146.700" y="243.200" width="6.300" height="6.600" fill="#C8C8C8"/><text x="1140.600" y="268.200" font-family="Liberation Sans,sans-serif" font-size="9.600" font-weight="bold" fill="#6CC070" textLength="11.600" lengthAdjust="spacingAndGlyphs">C#</text><path d="M1142.400 278.400v-1.800h6l3 3v8.200h-1.800" stroke="#D4D4D4" stroke-width="1.200" fill="none"/><path d="M1140.400 278.700h5.600l3 3v7.600h-8.600zM1146 278.700v3h3" stroke="#D4D4D4" stroke-width="1.200" fill="#252526"/><path d="M1428.4 493.2h5.6l-2.8 3z" fill="#F1F1F1"/><rect x="1096.800" y="511.8" width="5.200" height="5.200" fill="#D4D4D4"/><path d="M1097.800 514.4h3.200M1099.400 512.8v3.200" stroke="#2D2D30" stroke-width="1"/><rect x="1096.800" y="521" width="5.200" height="5.200" fill="#D4D4D4"/><path d="M1097.800 523.6h3.200M1099.400 522v3.200" stroke="#2D2D30" stroke-width="1"/><path d="M1103.400 512.500h4.600M1103.400 514.600h4.600M1103.400 516.600h4.600M1103.400 518.600h4.600M1103.400 520.600h4.600M1103.400 523.400h4.600M1103.400 525.400h4.600M1109.200 514.600h2M1109.200 516.600h2M1109.200 518.600h2M1109.200 520.600h2M1109.200 525.400h2" stroke="#D4D4D4" stroke-width="1"/><rect x="1116.500" y="508.500" width="22.400" height="21.400" fill="#222226" stroke="#3A7DC4" stroke-width="1"/><rect x="1119.800" y="511.800" width="7.400" height="7.200" fill="#D4D4D4"/><text x="1120.900" y="518.200" font-family="Liberation Sans,sans-serif" font-size="7.400" font-weight="bold" fill="#2D2D30">A</text><text x="1120.800" y="526.200" font-family="Liberation Sans,sans-serif" font-size="7.600" font-weight="bold" fill="#D4D4D4">Z</text><path d="M1131 515.200v7" stroke="#D4D4D4" stroke-width="1.900"/><path d="M1127.900 520.400l3.100 3.900 3.100-3.900z" fill="#D4D4D4"/><g transform="translate(1150.7 513) scale(1)"><path d="M1.200 9.800l5-5" stroke="#C8C8C8" stroke-width="2.500" stroke-linecap="round"/><path d="M11.200 2.600a3.500 3.500 0 1 1-2.500-2.400l-1.900 2 .5 1.700 1.700.5z" fill="#C8C8C8"/></g><path d="M1438.59 831.40h1.100v1.100h-1.100zM1436.56 833.45h1.100v1.100h-1.100zM1438.59 833.45h1.100v1.100h-1.100zM1434.53 835.50h1.100v1.100h-1.100zM1436.56 835.50h1.100v1.100h-1.100zM1438.59 835.50h1.100v1.100h-1.100zM1432.50 837.55h1.100v1.100h-1.100zM1434.53 837.55h1.100v1.100h-1.100zM1436.56 837.55h1.100v1.100h-1.100zM1438.59 837.55h1.100v1.100h-1.100z" fill="#74C0FA"/></svg>
</body></html>
